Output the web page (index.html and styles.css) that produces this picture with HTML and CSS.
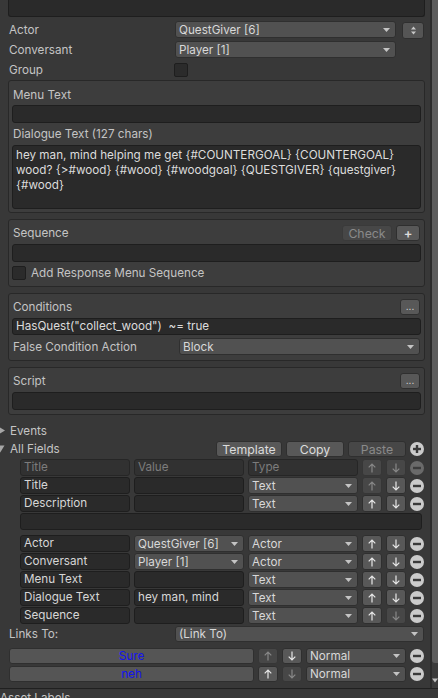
FILE: index.html
```html
<!DOCTYPE html>
<html>
<head>
<meta charset="utf-8">
<link rel="stylesheet" href="styles.css">
</head>
<body>
<div class="main">
  <div class="content">
    <div class="field top-field"></div>

    <div class="prop first">
      <div class="plabel">Actor</div>
      <div class="popup top-pop"><span class="ptext">QuestGiver [6]</span><svg class="caret" width="7" height="4" viewBox="0 0 7 4"><path d="M0 0H7L3.5 4Z"/></svg></div>
      <div class="btn mini"><svg width="7" height="10" viewBox="0 0 7 10"><path d="M3.5 0.5L6 3.5H1Z M1 5.5H6L3.5 8.5Z" fill="#c8c8c8"/></svg></div>
    </div>
    <div class="prop">
      <div class="plabel">Conversant</div>
      <div class="popup top-pop"><span class="ptext">Player [1]</span><svg class="caret" width="7" height="4" viewBox="0 0 7 4"><path d="M0 0H7L3.5 4Z"/></svg></div>
    </div>
    <div class="prop">
      <div class="plabel">Group</div>
      <div class="check group-check"></div>
    </div>

    <div class="panel p-text">
      <div class="ph"><span class="plab">Menu Text</span></div>
      <div class="field pf18 mt2"></div>
      <div class="ph mt3"><span class="plab">Dialogue Text (127 chars)</span></div>
      <div class="field textarea">hey man, mind helping me get {#COUNTERGOAL} {COUNTERGOAL}<br>wood? {&gt;#wood} {#wood} {#woodgoal} {QUESTGIVER} {questgiver}<br>{#wood}</div>
    </div>

    <div class="panel p-seq">
      <div class="ph"><span class="plab">Sequence</span><div class="btn dis check-btn">Check</div><div class="btn plus-btn">+</div></div>
      <div class="field pf18 mt3"></div>
      <div class="checkrow"><div class="check"></div><span class="plab">Add Response Menu Sequence</span></div>
    </div>

    <div class="panel p-cond">
      <div class="ph"><span class="plab">Conditions</span><div class="btn dots">...</div></div>
      <div class="field pf17 mt3 ftext">HasQuest("collect_wood")  ~= true</div>
      <div class="prop2">
        <div class="plabel2">False Condition Action</div>
        <div class="popup grow"><span class="ptext">Block</span><svg class="caret" width="7" height="4" viewBox="0 0 7 4"><path d="M0 0H7L3.5 4Z"/></svg></div>
      </div>
    </div>

    <div class="panel p-script">
      <div class="ph"><span class="plab">Script</span><div class="btn dots">...</div></div>
      <div class="field pf18 mt3"></div>
    </div>

    <div class="fold events">
      <svg class="foldicon" width="9" height="19" viewBox="0 0 9 19"><path d="M-1 6L5 9.5L-1 13Z"/></svg>
      <span class="plab">Events</span>
    </div>
    <div class="fold allfields">
      <svg class="foldicon" width="9" height="18" viewBox="0 0 9 18"><path d="M-4 5.5H4.5L0.2 12.5Z"/></svg>
      <span class="plab grow">All Fields</span>
      <div class="btn tb tmpl">Template</div>
      <div class="btn tb cp">Copy</div>
      <div class="btn dis tb cp">Paste</div>
      <svg class="mc" width="14" height="14" viewBox="0 0 14 14"><circle cx="7" cy="7" r="7"/><rect x="3" y="5.8" width="8" height="2.4"/><rect x="5.8" y="3" width="2.4" height="8"/></svg>
    </div>

    <div class="table">
      <div class="trow">
        <div class="tf hdr">Title</div>
        <div class="tf hdr">Value</div>
        <div class="tf hdr">Type</div>
        <div class="ab dis"><svg width="8" height="10" viewBox="0 0 8 10"><path d="M4 9.5V1M0.7 4.3L4 1L7.3 4.3"/></svg></div>
        <div class="ab dis"><svg width="8" height="10" viewBox="0 0 8 10"><path d="M4 0.5V9M0.7 5.7L4 9L7.3 5.7"/></svg></div>
        <svg class="mc dis" width="14" height="14" viewBox="0 0 14 14"><circle cx="7" cy="7" r="7"/><rect x="3" y="5.8" width="8" height="2.4"/></svg>
      </div>
      <div class="trow">
        <div class="tf">Title</div>
        <div class="tf"></div>
        <div class="popup"><span class="ptext">Text</span><svg class="caret" width="7" height="4" viewBox="0 0 7 4"><path d="M0 0H7L3.5 4Z"/></svg></div>
        <div class="ab dis"><svg width="8" height="10" viewBox="0 0 8 10"><path d="M4 9.5V1M0.7 4.3L4 1L7.3 4.3"/></svg></div>
        <div class="ab"><svg width="8" height="10" viewBox="0 0 8 10"><path d="M4 0.5V9M0.7 5.7L4 9L7.3 5.7"/></svg></div>
        <svg class="mc" width="14" height="14" viewBox="0 0 14 14"><circle cx="7" cy="7" r="7"/><rect x="3" y="5.8" width="8" height="2.4"/></svg>
      </div>
      <div class="trow">
        <div class="tf">Description</div>
        <div class="tf"></div>
        <div class="popup"><span class="ptext">Text</span><svg class="caret" width="7" height="4" viewBox="0 0 7 4"><path d="M0 0H7L3.5 4Z"/></svg></div>
        <div class="ab"><svg width="8" height="10" viewBox="0 0 8 10"><path d="M4 9.5V1M0.7 4.3L4 1L7.3 4.3"/></svg></div>
        <div class="ab"><svg width="8" height="10" viewBox="0 0 8 10"><path d="M4 0.5V9M0.7 5.7L4 9L7.3 5.7"/></svg></div>
        <svg class="mc" width="14" height="14" viewBox="0 0 14 14"><circle cx="7" cy="7" r="7"/><rect x="3" y="5.8" width="8" height="2.4"/></svg>
      </div>
      <div class="field wide"></div>
      <div class="trow gap">
        <div class="tf">Actor</div>
        <div class="popup"><span class="ptext">QuestGiver [6]</span><svg class="caret" width="7" height="4" viewBox="0 0 7 4"><path d="M0 0H7L3.5 4Z"/></svg></div>
        <div class="popup"><span class="ptext">Actor</span><svg class="caret" width="7" height="4" viewBox="0 0 7 4"><path d="M0 0H7L3.5 4Z"/></svg></div>
        <div class="ab"><svg width="8" height="10" viewBox="0 0 8 10"><path d="M4 9.5V1M0.7 4.3L4 1L7.3 4.3"/></svg></div>
        <div class="ab"><svg width="8" height="10" viewBox="0 0 8 10"><path d="M4 0.5V9M0.7 5.7L4 9L7.3 5.7"/></svg></div>
        <svg class="mc" width="14" height="14" viewBox="0 0 14 14"><circle cx="7" cy="7" r="7"/><rect x="3" y="5.8" width="8" height="2.4"/></svg>
      </div>
      <div class="trow">
        <div class="tf">Conversant</div>
        <div class="popup"><span class="ptext">Player [1]</span><svg class="caret" width="7" height="4" viewBox="0 0 7 4"><path d="M0 0H7L3.5 4Z"/></svg></div>
        <div class="popup"><span class="ptext">Actor</span><svg class="caret" width="7" height="4" viewBox="0 0 7 4"><path d="M0 0H7L3.5 4Z"/></svg></div>
        <div class="ab"><svg width="8" height="10" viewBox="0 0 8 10"><path d="M4 9.5V1M0.7 4.3L4 1L7.3 4.3"/></svg></div>
        <div class="ab"><svg width="8" height="10" viewBox="0 0 8 10"><path d="M4 0.5V9M0.7 5.7L4 9L7.3 5.7"/></svg></div>
        <svg class="mc" width="14" height="14" viewBox="0 0 14 14"><circle cx="7" cy="7" r="7"/><rect x="3" y="5.8" width="8" height="2.4"/></svg>
      </div>
      <div class="trow">
        <div class="tf">Menu Text</div>
        <div class="tf"></div>
        <div class="popup"><span class="ptext">Text</span><svg class="caret" width="7" height="4" viewBox="0 0 7 4"><path d="M0 0H7L3.5 4Z"/></svg></div>
        <div class="ab"><svg width="8" height="10" viewBox="0 0 8 10"><path d="M4 9.5V1M0.7 4.3L4 1L7.3 4.3"/></svg></div>
        <div class="ab"><svg width="8" height="10" viewBox="0 0 8 10"><path d="M4 0.5V9M0.7 5.7L4 9L7.3 5.7"/></svg></div>
        <svg class="mc" width="14" height="14" viewBox="0 0 14 14"><circle cx="7" cy="7" r="7"/><rect x="3" y="5.8" width="8" height="2.4"/></svg>
      </div>
      <div class="trow">
        <div class="tf">Dialogue Text</div>
        <div class="tf">hey man, mind</div>
        <div class="popup"><span class="ptext">Text</span><svg class="caret" width="7" height="4" viewBox="0 0 7 4"><path d="M0 0H7L3.5 4Z"/></svg></div>
        <div class="ab"><svg width="8" height="10" viewBox="0 0 8 10"><path d="M4 9.5V1M0.7 4.3L4 1L7.3 4.3"/></svg></div>
        <div class="ab"><svg width="8" height="10" viewBox="0 0 8 10"><path d="M4 0.5V9M0.7 5.7L4 9L7.3 5.7"/></svg></div>
        <svg class="mc" width="14" height="14" viewBox="0 0 14 14"><circle cx="7" cy="7" r="7"/><rect x="3" y="5.8" width="8" height="2.4"/></svg>
      </div>
      <div class="trow">
        <div class="tf">Sequence</div>
        <div class="tf"></div>
        <div class="popup"><span class="ptext">Text</span><svg class="caret" width="7" height="4" viewBox="0 0 7 4"><path d="M0 0H7L3.5 4Z"/></svg></div>
        <div class="ab"><svg width="8" height="10" viewBox="0 0 8 10"><path d="M4 9.5V1M0.7 4.3L4 1L7.3 4.3"/></svg></div>
        <div class="ab dis"><svg width="8" height="10" viewBox="0 0 8 10"><path d="M4 0.5V9M0.7 5.7L4 9L7.3 5.7"/></svg></div>
        <svg class="mc" width="14" height="14" viewBox="0 0 14 14"><circle cx="7" cy="7" r="7"/><rect x="3" y="5.8" width="8" height="2.4"/></svg>
      </div>
    </div>

    <div class="links">
      <div class="plabel">Links To:</div>
      <div class="popup grow links-pop"><span class="ptext">(Link To)</span><svg class="caret" width="7" height="4" viewBox="0 0 7 4"><path d="M0 0H7L3.5 4Z"/></svg></div>
    </div>

    <div class="resp first-resp">
      <div class="btn rbtn">Sure</div>
      <div class="ab dis"><svg width="8" height="10" viewBox="0 0 8 10"><path d="M4 9.5V1M0.7 4.3L4 1L7.3 4.3"/></svg></div>
      <div class="ab"><svg width="8" height="10" viewBox="0 0 8 10"><path d="M4 0.5V9M0.7 5.7L4 9L7.3 5.7"/></svg></div>
      <div class="popup npop"><span class="ptext">Normal</span><svg class="caret" width="7" height="4" viewBox="0 0 7 4"><path d="M0 0H7L3.5 4Z"/></svg></div>
      <svg class="mc" width="14" height="14" viewBox="0 0 14 14"><circle cx="7" cy="7" r="7"/><rect x="3" y="5.8" width="8" height="2.4"/></svg>
    </div>
    <div class="resp">
      <div class="btn rbtn">neh</div>
      <div class="ab"><svg width="8" height="10" viewBox="0 0 8 10"><path d="M4 9.5V1M0.7 4.3L4 1L7.3 4.3"/></svg></div>
      <div class="ab dis"><svg width="8" height="10" viewBox="0 0 8 10"><path d="M4 0.5V9M0.7 5.7L4 9L7.3 5.7"/></svg></div>
      <div class="popup npop"><span class="ptext">Normal</span><svg class="caret" width="7" height="4" viewBox="0 0 7 4"><path d="M0 0H7L3.5 4Z"/></svg></div>
      <svg class="mc" width="14" height="14" viewBox="0 0 14 14"><circle cx="7" cy="7" r="7"/><rect x="3" y="5.8" width="8" height="2.4"/></svg>
    </div>
  </div>

  <div class="scrollbar">
    <div class="thumb"></div>
    <div class="sb-rest">
      <svg class="sb-arrow" width="6" height="5" viewBox="0 0 6 5"><path d="M0 0.5H6L3 4.5Z"/></svg>
    </div>
  </div>
</div>
<div class="divider"></div>
<div class="asset">Asset Labels</div>
</body>
</html>
```

FILE: styles.css
```css
* { box-sizing: border-box; }

html, body {
  margin: 0;
  padding: 0;
}

body {
  width: 438px;
  height: 698px;
  overflow: hidden;
  background: #383838;
  font-family: Inter, "Noto Sans", sans-serif;
  font-size: 11.7px;
  color: #c4c4c4;
}

.main {
  display: flex;
  height: 688px;
  overflow: hidden;
}

.content {
  width: 430px;
  padding: 0 5px 0 8px;
  display: flex;
  flex-direction: column;
  flex-shrink: 0;
}

/* generic controls */
.field {
  background: #2a2a2a;
  border: 1px solid #1e1e1e;
  border-radius: 3px;
  color: #d4d4d4;
}

.popup {
  height: 17px;
  background: #515151;
  border: 1px solid #2f2f2f;
  border-radius: 3px;
  display: flex;
  align-items: center;
  padding-left: 3px;
  color: #d8d8d8;
  white-space: nowrap;
  overflow: hidden;
}

.popup .ptext {
  flex: 1;
  overflow: hidden;
}

.caret {
  flex-shrink: 0;
  margin-right: 5px;
  fill: #c4c4c4;
}

.btn {
  background: #585858;
  border: 1px solid #2f2f2f;
  border-radius: 3px;
  color: #dcdcdc;
  display: flex;
  align-items: center;
  justify-content: center;
  height: 16px;
  flex-shrink: 0;
}

.btn.dis {
  background: #474747;
  color: #8a8a8a;
}

.check {
  width: 14px;
  height: 14px;
  background: #2b2b2b;
  border: 1px solid #1e1e1e;
  border-radius: 2px;
  flex-shrink: 0;
}

.grow { flex: 1; }
.mt2 { margin-top: 2px; }
.mt3 { margin-top: 3px; }

/* top section */
.top-field {
  height: 17px;
  border-top: none;
  border-radius: 0 0 3px 3px;
}

.prop {
  display: flex;
  align-items: center;
  height: 17px;
  margin-top: 3px;
}

.prop.first { margin-top: 4px; }

.plabel {
  width: 167px;
  padding-left: 1px;
  flex-shrink: 0;
  white-space: nowrap;
}

.top-pop { width: 221px; }

.mini {
  width: 22px;
  height: 17px;
  margin-left: 6px;
  margin-top: 2px;
  background: #555555;
}

.group-check { margin-left: -1px; }

/* panels */
.panel {
  border: 1px solid #282828;
  border-radius: 3px;
  background: #3d3d3d;
  padding: 5px 3px 4px;
  margin-top: 6px;
  display: flex;
  flex-direction: column;
}

.p-text {
  margin-top: 2px;
  padding-top: 6px;
  padding-bottom: 3px;
}

.p-cond { padding-bottom: 5px; }

.ph {
  height: 16px;
  display: flex;
  align-items: center;
}

.plab {
  padding-left: 1px;
  white-space: nowrap;
}

.ph .plab { flex: 1; }

.pf18 { height: 18px; }
.pf17 { height: 17px; }

.ftext {
  padding-left: 3px;
  line-height: 15px;
  white-space: pre;
  color: #dcdcdc;
}

.textarea {
  margin-top: 3px;
  height: 64px;
  padding: 2px 3px;
  line-height: 15px;
  white-space: nowrap;
  overflow: hidden;
  color: #dcdcdc;
}

.check-btn {
  width: 50px;
  margin-right: 4px;
  background: #474747;
  border-color: #3a3a3a;
  color: #9a9a9a;
  font-size: 12.3px;
}

.plus-btn {
  width: 24px;
  margin-right: 1px;
  font-weight: 600;
  font-size: 13px;
}

.dots {
  width: 20px;
  margin-right: 1px;
  font-size: 10px;
  padding-bottom: 2px;
}

.checkrow {
  height: 18px;
  margin-top: 2px;
  display: flex;
  align-items: center;
  gap: 4px;
}

.prop2 {
  height: 17px;
  margin-top: 3px;
  display: flex;
  align-items: center;
}

.plabel2 {
  width: 167px;
  padding-left: 1px;
  flex-shrink: 0;
  white-space: nowrap;
}

.prop2 .popup { margin-right: 1px; }

/* foldouts */
.fold {
  display: flex;
  align-items: center;
  margin-left: -8px;
}

.foldicon {
  flex-shrink: 0;
  fill: #a6a6a6;
  align-self: flex-start;
}

.events {
  height: 19px;
  margin-top: 6px;
}

.allfields {
  height: 18px;
  gap: 4px;
}

.allfields .foldicon { margin-right: -4px; }

.tb { height: 16px; font-size: 12.3px; }
.tmpl { width: 66px; }
.cp { width: 58px; }

.allfields .mc { margin-right: 1px; }

.mc { flex-shrink: 0; }
.mc circle { fill: #cbcbcb; }
.mc rect { fill: #3a3a3a; }
.mc.dis circle { fill: #6a6a6a; }
.mc.dis rect { fill: #3c3c3c; }

/* table */
.table {
  margin-top: 1px;
  margin-left: 12px;
  display: flex;
  flex-direction: column;
}

.trow {
  display: grid;
  grid-template-columns: 110px 110px 110px 20px 20px 14px;
  column-gap: 4px;
  height: 17px;
  margin-bottom: 1px;
  align-items: center;
}

.trow.gap { margin-top: 4px; }

.tf {
  height: 17px;
  background: #2a2a2a;
  border: 1px solid #1e1e1e;
  border-radius: 3px;
  padding-left: 3px;
  line-height: 15px;
  color: #d6d6d6;
  white-space: nowrap;
  overflow: hidden;
}

.tf.hdr {
  background: #313131;
  border-color: #262626;
  color: #7c7c7c;
}

.ab {
  width: 20px;
  height: 17px;
  background: #585858;
  border: 1px solid #2f2f2f;
  border-radius: 3px;
  display: flex;
  align-items: center;
  justify-content: center;
  color: #e8e8e8;
  flex-shrink: 0;
}

.ab svg {
  fill: none;
  stroke: currentColor;
  stroke-width: 1.2;
}

.ab.dis {
  background: #474747;
  border-color: #363636;
  color: #888888;
}

.field.wide {
  height: 17px;
  width: 402px;
  margin-bottom: 1px;
}

/* links */
.links {
  display: flex;
  align-items: center;
  height: 18px;
  margin-top: 0;
}

.links-pop {
  height: 16px;
  margin-right: 1px;
}

.resp {
  display: flex;
  align-items: center;
  gap: 4px;
  height: 16px;
  margin-top: 2px;
  margin-left: 1px;
  margin-right: 1px;
}

.resp.first-resp { margin-top: 5px; }

.resp .ab { height: 16px; }

.rbtn {
  flex: 1;
  height: 16px;
  background: #555555;
  color: #1414f0;
}

.npop {
  width: 100px;
  height: 16px;
}

/* scrollbar */
.scrollbar {
  width: 8px;
  border-left: 2px solid #2b2b2b;
  background: #3a3a3a;
  display: flex;
  flex-direction: column;
  flex-shrink: 0;
}

.thumb {
  height: 663px;
  background: #5c5c5c;
  border-radius: 0 0 0 3px;
  flex-shrink: 0;
}

.sb-rest {
  flex: 1;
  display: flex;
  justify-content: center;
  padding-top: 15px;
}

.sb-arrow { fill: #bdbdbd; }

.divider {
  height: 1px;
  background: #202020;
}

.asset {
  height: 9px;
  overflow: hidden;
  line-height: 18px;
  color: #c4c4c4;
  white-space: nowrap;
}
```
